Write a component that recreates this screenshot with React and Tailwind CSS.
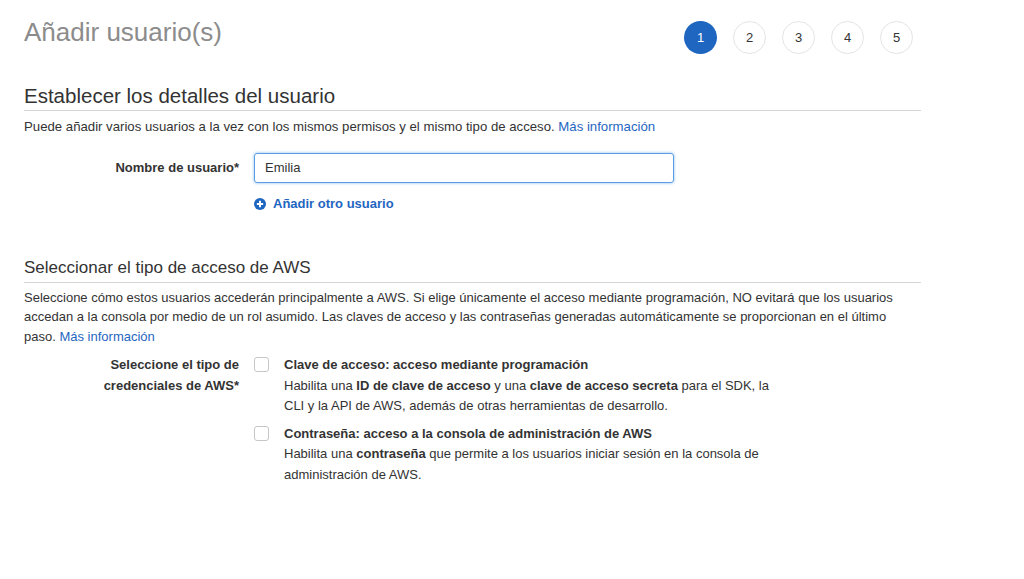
import React from 'react';

const steps = [1, 2, 3, 4, 5];

const Checkbox = () => (
  <span className="mt-[-1px] block h-[15px] w-[15px] shrink-0 rounded-[3px] border border-[#c6c6c6] bg-white"></span>
);

export default function App() {
  return (
    <div className="min-h-[579px] bg-white font-['Liberation_Sans',Arial,sans-serif] text-[#333]">
      <div className="w-[897px] pl-[24px] box-content">
        {/* Header */}
        <div className="flex items-start justify-between pt-[16px]">
          <h1 className="m-0 text-[26px] leading-[32px] font-normal text-[#8c8c8c]">Añadir usuario(s)</h1>
          <div className="mr-[8px] mt-[5px] flex gap-[16px]">
            {steps.map(s => (
              <div
                key={s}
                className={`flex h-[33px] w-[33px] items-center justify-center rounded-full text-[13px] ${
                  s === 1 ? 'bg-[#1f66c1] text-white' : 'border border-[#e4e4e4] bg-white text-[#333]'
                }`}
              >
                {s}
              </div>
            ))}
          </div>
        </div>

        {/* Section 1 */}
        <div className="mt-[30px]">
          <h2 className="m-0 border-b border-[#d5d5d5] pb-[2px] text-[20.5px] leading-[24px] font-normal text-[#333]">
            Establecer los detalles del usuario
          </h2>
          <p className="m-0 mt-[6px] text-[13.2px] leading-[19px]">
            Puede añadir varios usuarios a la vez con los mismos permisos y el mismo tipo de acceso.{' '}
            <a className="text-[#1f66c1]">Más información</a>
          </p>

          <div className="mt-[17px] flex items-center">
            <label className="w-[215px] shrink-0 text-right text-[13px] font-bold">Nombre de usuario*</label>
            <div className="ml-[15px] flex h-[30px] w-[420px] items-center rounded-[3px] border border-[#5b9de0] px-[10px] text-[13px] shadow-[0_0_3px_#7fb5ee]">
              Emilia
            </div>
          </div>
          <div className="mt-[11px] flex items-center gap-[7px] pl-[230px] text-[13px] font-bold text-[#1f66c1]">
            <svg width="12" height="12" viewBox="0 0 16 16">
              <circle cx="8" cy="8" r="8" fill="#1f66c1" />
              <path d="M8 3.8v8.4M3.8 8h8.4" stroke="white" strokeWidth="2.6" />
            </svg>
            Añadir otro usuario
          </div>
        </div>

        {/* Section 2 */}
        <div className="mt-[42px]">
          <h2 className="m-0 border-b border-[#d5d5d5] pb-[2px] text-[17px] leading-[24px] font-normal text-[#333]">
            Seleccionar el tipo de acceso de AWS
          </h2>
          <p className="m-0 mt-[5px] text-[13px] leading-[19.5px]">
            Seleccione cómo estos usuarios accederán principalmente a AWS. Si elige únicamente el acceso mediante
            programación, NO evitará que los usuarios accedan a la consola por medio de un rol asumido. Las claves de
            acceso y las contraseñas generadas automáticamente se proporcionan en el último paso.{' '}
            <a className="text-[#1f66c1]">Más información</a>
          </p>

          <div className="mt-[9px] flex text-[13px] leading-[20.5px]">
            <div className="w-[215px] shrink-0 text-right font-bold">
              Seleccione el tipo de
              <br />
              credenciales de AWS*
            </div>
            <div className="ml-[15px] flex flex-col gap-[7px]">
              <div className="flex items-center gap-[15px]">
                <Checkbox />
                <div className="font-bold">Clave de acceso: acceso mediante programación</div>
              </div>
              <div className="-mt-[7px] pl-[30px]">
                Habilita una <b>ID de clave de acceso</b> y una <b>clave de acceso secreta</b> para el SDK, la
                <br />
                CLI y la API de AWS, además de otras herramientas de desarrollo.
              </div>
              <div className="flex items-center gap-[15px]">
                <Checkbox />
                <div className="font-bold">Contraseña: acceso a la consola de administración de AWS</div>
              </div>
              <div className="-mt-[7px] pl-[30px]">
                Habilita una <b>contraseña</b> que permite a los usuarios iniciar sesión en la consola de
                <br />
                administración de AWS.
              </div>
            </div>
          </div>
        </div>
      </div>
    </div>
  );
}
